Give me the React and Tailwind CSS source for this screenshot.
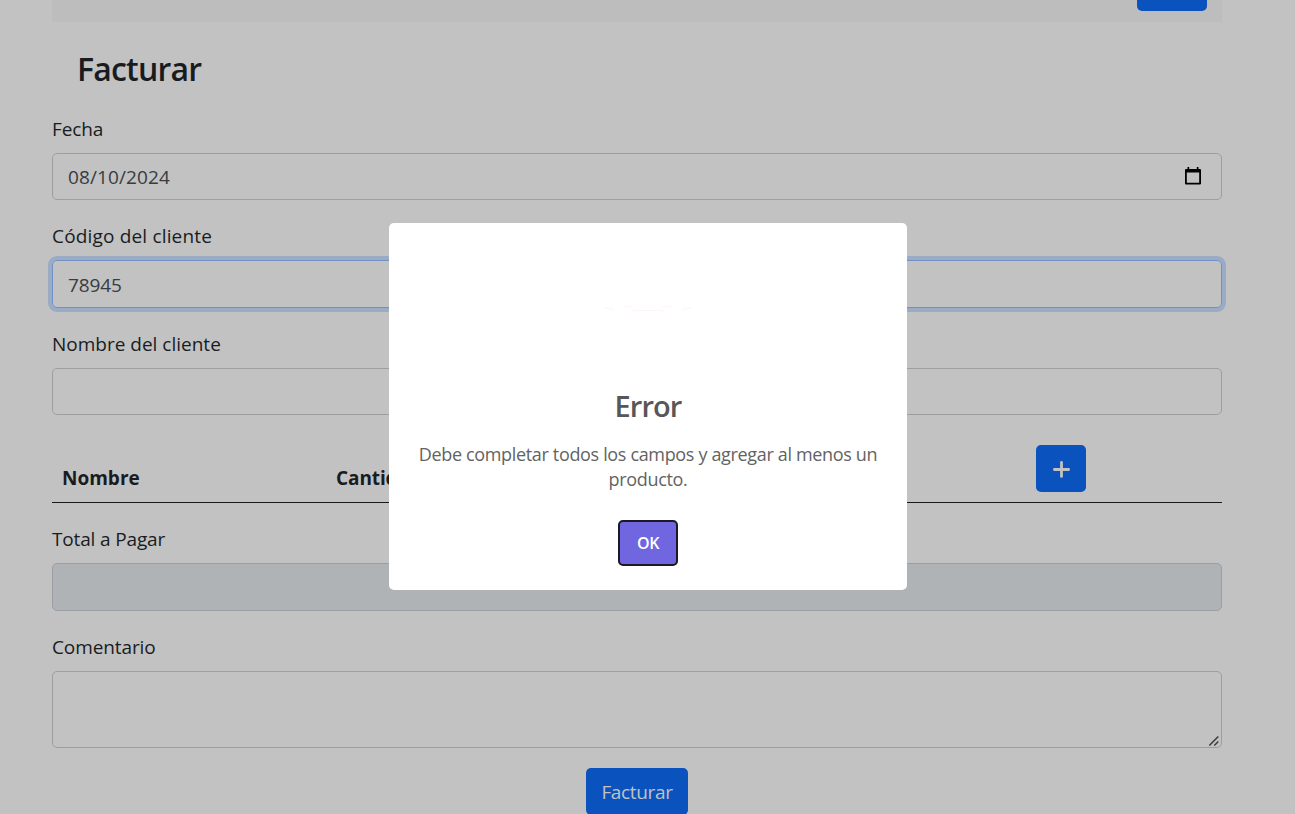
import React from "react";

function Label({ children, className = "" }) {
  return <label className={`flex h-[30px] items-center whitespace-nowrap text-[19px] text-[#191c1f] ${className}`}>{children}</label>;
}

const field = "block w-full rounded-[5px] border border-[#9b9fa2] bg-transparent px-[15px] text-[19px] text-[#383c40] outline-none";

export default function App() {
  return (
    <div className="relative h-[814px] w-[1295px] overflow-hidden bg-[#c2c2c2] font-['Open_Sans','Noto_Sans',sans-serif] text-[#191c1f]">
      <main className="ml-[52px] flex w-[1170px] flex-col">
        <div className="flex h-[22px] justify-end bg-[#bdbdbd] pr-[15px]">
          <div className="h-[11px] w-[70px] rounded-b-[5px] bg-[#0a53be]" />
        </div>
        <h1 className="mt-[23px] flex h-[48px] items-center pl-[25px] text-[32px] font-semibold">
          <span className="tracking-[-0.8px]">Facturar</span>
        </h1>

        <Label className="mt-[21px] tracking-[-0.1px]">Fecha</Label>
        <div className={`${field} mt-[9px] flex h-[47px] items-center justify-between`}>
          <span className="pt-[2px] tracking-[0.1px]">08/10/2024</span>
          <svg className="mr-[4px] -mt-[2px]" width="18" height="20" viewBox="0 0 18 20">
            <path d="M3.5 1h1.7v2h7.6V1h1.7v2H16a1 1 0 0 1 1 1v13.5a1 1 0 0 1-1 1H2a1 1 0 0 1-1-1V4a1 1 0 0 1 1-1h1.5zM2.8 6.5v10.2h12.4V6.5z" fill="#000" fillRule="evenodd" />
          </svg>
        </div>

        <Label className="mt-[21px] tracking-[0.17px]">Código del cliente</Label>
        <input readOnly value="78945" className="mt-[9px] block h-[48px] w-full rounded-[5px] border border-[#7191c3] bg-transparent px-[15px] pt-[2px] text-[19px] tracking-[-0.1px] text-[#383c40] shadow-[0_0_0_4px_#9aabc6] outline-none" />

        <Label className="mt-[21px]">Nombre del cliente</Label>
        <input readOnly value="" className={`${field} mt-[9px] h-[47px]`} />

        <div className="mt-[20px] flex h-[68px] border-b border-[#17191b] text-[19px] font-bold">
          <div className="flex w-[274px] items-end pb-[10px] pl-[10px]">Nombre</div>
          <div className="flex w-[274px] items-end pb-[10px] pl-[10px] tracking-[-0.1px]">Cantidad</div>
          <div className="flex flex-1 justify-end pr-[136px] pt-[10px]">
            <button className="flex h-[47px] w-[50px] items-center justify-center rounded-[5px] bg-[#0a53be]">
              <svg width="18" height="18" viewBox="0 0 18 18" stroke="#c2c2c2" strokeWidth="2.8" strokeLinecap="round">
                <path d="M9.5 2.4v14M2.4 9.5h14.2" />
              </svg>
            </button>
          </div>
        </div>

        <Label className="mt-[21px] tracking-[-0.15px]">Total a Pagar</Label>
        <input readOnly value="" className="mt-[9px] block h-[48px] w-full rounded-[5px] border border-[#9b9fa5] bg-[#afb3b6] outline-none" />

        <Label className="mt-[21px] tracking-[-0.1px]">Comentario</Label>
        <div className="mt-[9px] flex h-[77px] items-end justify-end rounded-[5px] border border-[#9b9fa2] pb-px pr-[2px]">
          <svg width="10" height="10" viewBox="0 0 10 10" stroke="#3c3c3c" strokeWidth="1.5">
            <path d="M.3 9.5l9-9M5.3 9.5l4-4" />
          </svg>
        </div>

        <button className="mt-[20px] flex h-[47px] w-[102px] shrink-0 items-center justify-center self-center rounded-[5px] bg-[#0a53be] pt-[2px] text-[19px] tracking-[-0.35px] text-[#c2c2c2]">
          Facturar
        </button>
      </main>

      <div role="dialog" className="absolute left-[389px] top-[223px] flex h-[367px] w-[518px] flex-col items-center rounded-[5px] bg-white">
        <svg className="mt-[80px]" width="90" height="12" viewBox="0 0 90 12" stroke="#fdf6f8" strokeWidth="1">
          <path d="M1 5.5h4M4 4.5h5M6 6.5h5M21 3.5h9M28 7.5h34M59 3.5h10M79 6.5h5M81 4.5h5M85 5.5h4" />
        </svg>
        <h2 className="mt-[71px] flex h-[40px] items-center text-[29px] font-semibold text-[#575757]">
          <span className="tracking-[-0.9px]">Error</span>
        </h2>
        <p className="mt-[16px] whitespace-nowrap text-center text-[18px] leading-[25px] tracking-[-0.34px] text-[#636363]">
          Debe completar todos los campos y agregar al menos un<br />producto.
        </p>
        <button className="mt-[28px] flex h-[46px] w-[60px] items-center justify-center rounded-[5px] border-2 border-[#1b1926] bg-[#7066e0] text-[16px] font-semibold tracking-[-0.3px] text-white">
          OK
        </button>
      </div>
    </div>
  );
}
